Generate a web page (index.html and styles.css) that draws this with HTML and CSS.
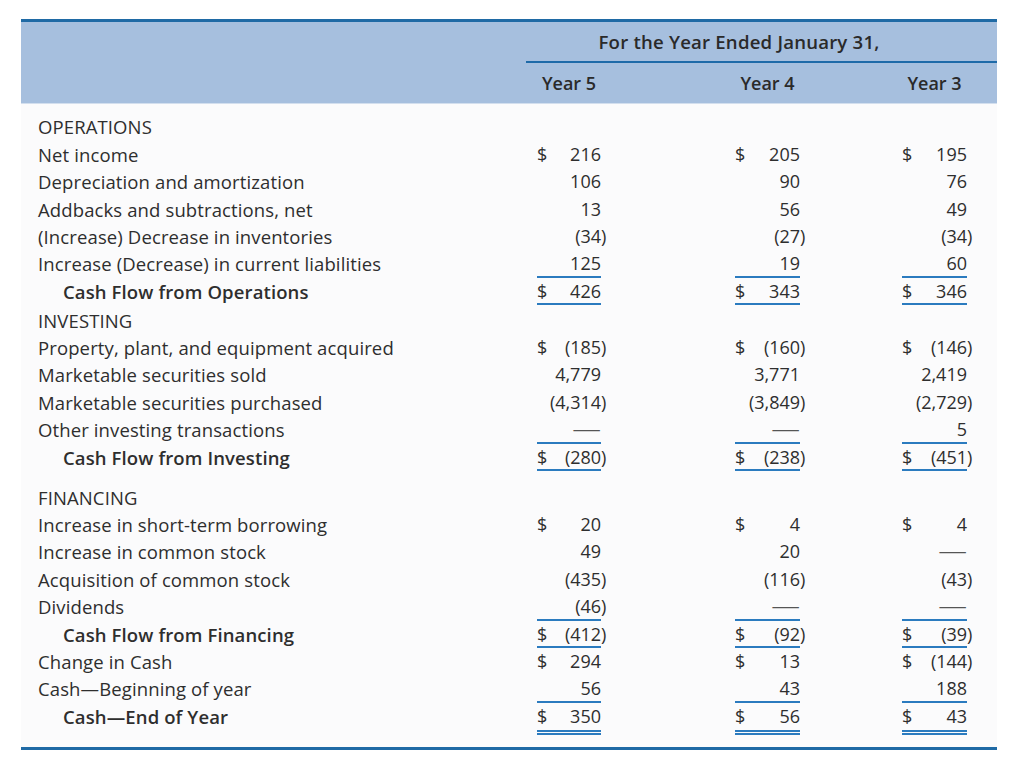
FILE: index.html
```html
<!DOCTYPE html>
<html lang="en">
<head>
<meta charset="utf-8">
<title>Statement of Cash Flows</title>
<link rel="stylesheet" href="styles.css">
</head>
<body>
<div class="statement">
  <div class="hdr">
    <div class="hdr-title">For the Year Ended January 31,</div>
    <div class="grid hdr-years">
      <div></div>
      <div class="yr">Year 5</div>
      <div></div>
      <div class="yr">Year 4</div>
      <div></div>
      <div class="yr">Year 3</div>
      <div></div>
    </div>
  </div>
  <div class="body">
    <div class="grid row"><div class="lbl">OPERATIONS</div></div>
    <div class="grid row"><div class="lbl">Net income</div>
      <div class="amt c5"><span>$</span><span>216</span></div>
      <div class="amt c4"><span>$</span><span>205</span></div>
      <div class="amt c3"><span>$</span><span>195</span></div></div>
    <div class="grid row"><div class="lbl">Depreciation and amortization</div>
      <div class="amt c5 r"><span>106</span></div>
      <div class="amt c4 r"><span>90</span></div>
      <div class="amt c3 r"><span>76</span></div></div>
    <div class="grid row"><div class="lbl">Addbacks and subtractions, net</div>
      <div class="amt c5 r"><span>13</span></div>
      <div class="amt c4 r"><span>56</span></div>
      <div class="amt c3 r"><span>49</span></div></div>
    <div class="grid row"><div class="lbl">(Increase) Decrease in inventories</div>
      <div class="amt c5 r"><span>(34<span class="cp">)</span></span></div>
      <div class="amt c4 r"><span>(27<span class="cp">)</span></span></div>
      <div class="amt c3 r"><span>(34<span class="cp">)</span></span></div></div>
    <div class="grid row ul"><div class="lbl">Increase (Decrease) in current liabilities</div>
      <div class="amt c5 r"><span>125</span></div>
      <div class="amt c4 r"><span>19</span></div>
      <div class="amt c3 r"><span>60</span></div></div>
    <div class="grid row ul"><div class="lbl total">Cash Flow from Operations</div>
      <div class="amt c5"><span>$</span><span>426</span></div>
      <div class="amt c4"><span>$</span><span>343</span></div>
      <div class="amt c3"><span>$</span><span>346</span></div></div>

    <div class="grid row sec-inv"><div class="lbl">INVESTING</div></div>
    <div class="grid row"><div class="lbl">Property, plant, and equipment acquired</div>
      <div class="amt c5"><span>$</span><span>(185<span class="cp">)</span></span></div>
      <div class="amt c4"><span>$</span><span>(160<span class="cp">)</span></span></div>
      <div class="amt c3"><span>$</span><span>(146<span class="cp">)</span></span></div></div>
    <div class="grid row"><div class="lbl">Marketable securities sold</div>
      <div class="amt c5 r"><span>4,779</span></div>
      <div class="amt c4 r"><span>3,771</span></div>
      <div class="amt c3 r"><span>2,419</span></div></div>
    <div class="grid row"><div class="lbl">Marketable securities purchased</div>
      <div class="amt c5 r"><span>(4,314<span class="cp">)</span></span></div>
      <div class="amt c4 r"><span>(3,849<span class="cp">)</span></span></div>
      <div class="amt c3 r"><span>(2,729<span class="cp">)</span></span></div></div>
    <div class="grid row ul"><div class="lbl">Other investing transactions</div>
      <div class="amt c5 r"><span class="dash">—</span></div>
      <div class="amt c4 r"><span class="dash">—</span></div>
      <div class="amt c3 r"><span>5</span></div></div>
    <div class="grid row ul"><div class="lbl total">Cash Flow from Investing</div>
      <div class="amt c5"><span>$</span><span>(280<span class="cp">)</span></span></div>
      <div class="amt c4"><span>$</span><span>(238<span class="cp">)</span></span></div>
      <div class="amt c3"><span>$</span><span>(451<span class="cp">)</span></span></div></div>

    <div class="grid row sec-fin"><div class="lbl">FINANCING</div></div>
    <div class="grid row"><div class="lbl">Increase in short-term borrowing</div>
      <div class="amt c5"><span>$</span><span>20</span></div>
      <div class="amt c4"><span>$</span><span>4</span></div>
      <div class="amt c3"><span>$</span><span>4</span></div></div>
    <div class="grid row"><div class="lbl">Increase in common stock</div>
      <div class="amt c5 r"><span>49</span></div>
      <div class="amt c4 r"><span>20</span></div>
      <div class="amt c3 r"><span class="dash">—</span></div></div>
    <div class="grid row"><div class="lbl">Acquisition of common stock</div>
      <div class="amt c5 r"><span>(435<span class="cp">)</span></span></div>
      <div class="amt c4 r"><span>(116<span class="cp">)</span></span></div>
      <div class="amt c3 r"><span>(43<span class="cp">)</span></span></div></div>
    <div class="grid row ul"><div class="lbl">Dividends</div>
      <div class="amt c5 r"><span>(46<span class="cp">)</span></span></div>
      <div class="amt c4 r"><span class="dash">—</span></div>
      <div class="amt c3 r"><span class="dash">—</span></div></div>
    <div class="grid row ul"><div class="lbl total">Cash Flow from Financing</div>
      <div class="amt c5"><span>$</span><span>(412<span class="cp">)</span></span></div>
      <div class="amt c4"><span>$</span><span>(92<span class="cp">)</span></span></div>
      <div class="amt c3"><span>$</span><span>(39<span class="cp">)</span></span></div></div>
    <div class="grid row"><div class="lbl">Change in Cash</div>
      <div class="amt c5"><span>$</span><span>294</span></div>
      <div class="amt c4"><span>$</span><span>13</span></div>
      <div class="amt c3"><span>$</span><span>(144<span class="cp">)</span></span></div></div>
    <div class="grid row ul"><div class="lbl">Cash—Beginning of year</div>
      <div class="amt c5 r"><span>56</span></div>
      <div class="amt c4 r"><span>43</span></div>
      <div class="amt c3 r"><span>188</span></div></div>
    <div class="grid row dul"><div class="lbl total">Cash—End of Year</div>
      <div class="amt c5"><span>$</span><span>350</span></div>
      <div class="amt c4"><span>$</span><span>56</span></div>
      <div class="amt c3"><span>$</span><span>43</span></div></div>
  </div>
</div>
</body>
</html>
```
FILE: styles.css
```css
html, body {
  margin: 0;
  padding: 0;
  background: #ffffff;
}

body {
  font-family: "Open Sans", "Noto Sans", sans-serif;
  font-size: 18px;
  color: #2e2e2e;
}

.statement {
  width: 976px;
  margin: 19px 0 0 21px;
}

.grid {
  display: grid;
  grid-template-columns: 516px 64px 134px 65px 102px 65px 30px;
}

/* Header band */
.hdr {
  border-top: 3px solid #1f6aa5;
  background: #a6bfde;
  border-bottom: 1px solid #d3dfee;
}

.hdr-title {
  margin-left: 505px;
  height: 39px;
  line-height: 39px;
  border-bottom: 2px solid #1e6aa8;
  text-align: center;
  padding-right: 45px;
  font-size: 18.6px;
  letter-spacing: 0.2px;
  font-weight: 600;
  color: #2a2a2a;
}

.hdr-years {
  height: 40px;
  line-height: 40px;
}

.yr {
  text-align: center;
  font-weight: 600;
  color: #2a2a2a;
}

/* Body */
.body {
  background: #fbfbfc;
  padding: 9.3px 0 12px;
  border-bottom: 3px solid #1f6aa5;
}

.row {
  line-height: 27.4px;
}

.lbl {
  grid-column: 1;
  padding-left: 17px;
  white-space: nowrap;
  font-size: 18.5px;
  letter-spacing: 0.12px;
}

.lbl.total {
  padding-left: 42px;
  font-weight: 600;
}

.sec-inv {
  margin-top: 1.5px;
}

.sec-fin {
  margin-top: 12.5px;
}

.amt {
  display: flex;
  justify-content: space-between;
  height: 27.4px;
  white-space: nowrap;
}

.amt.r {
  justify-content: flex-end;
}

.c5 { grid-column: 2; }
.c4 { grid-column: 4; }
.c3 { grid-column: 6; }

.cp {
  margin-right: -0.3em;
}

.dash {
  display: inline-block;
  color: #555;
  transform: scaleX(1.6);
  transform-origin: right center;
}

.ul .amt {
  box-sizing: border-box;
  border-bottom: 2px solid #2b7bbf;
}

.dul .amt {
  border-bottom: 5px double #2b7bbf;
}
```
